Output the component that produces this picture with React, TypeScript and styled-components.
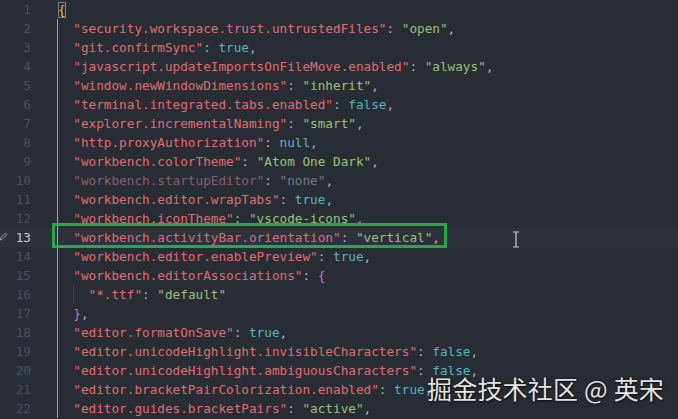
import React from "react";
import styled, { createGlobalStyle } from "styled-components";

const Global = createGlobalStyle`
  html, body { margin: 0; padding: 0; background: #282c34; }
  body { width: 678px; height: 419px; overflow: hidden; }
`;

type Kind = "key" | "str" | "const" | "p" | "b1" | "b2" | "dimKey" | "dimStr";

const colors: Record<Kind, string> = {
  key: "#e06c75",
  str: "#98c379",
  const: "#56b6c2",
  p: "#abb2bf",
  b1: "#e2c234",
  b2: "#d16fd0",
  dimKey: "#8a6068",
  dimStr: "#767c87",
};

const Editor = styled.div`
  position: relative;
  width: 678px;
  height: 419px;
  background: #282c34;
  overflow: hidden;
  font-family: "DejaVu Sans Mono", "Liberation Mono", monospace;
  font-size: 12.7px;
`;

const Row = styled.div<{ $active?: boolean }>`
  display: flex;
  height: 19px;
  line-height: 19px;
  background: ${(p) => (p.$active ? "#2c313b" : "transparent")};
  white-space: pre;
`;

const LineNo = styled.div<{ $active?: boolean }>`
  position: relative;
  width: 31px;
  flex: none;
  text-align: right;
  color: ${(p) => (p.$active ? "#c8ccd4" : "#4b5263")};
`;

const Code = styled.div<{ $guide?: boolean }>`
  position: relative;
  padding-left: 27px;
  flex: 1;
  &::before {
    content: "";
    position: absolute;
    left: 26px;
    top: 0;
    bottom: 0;
    width: 1px;
    background: ${(p) => (p.$guide ? "#c8aa34" : "transparent")};
  }
`;

const Tok = styled.span<{ $k: Kind }>`
  color: ${(p) => colors[p.$k]};
`;

const MatchBox = styled.span`
  display: inline-block;
  outline: 1px solid #7d8390;
  outline-offset: -1px;
  line-height: 16px;
  margin-top: 1px;
  color: ${colors.b1};
`;

const InnerGuide = styled.span`
  position: absolute;
  left: 42px;
  top: 0;
  bottom: 0;
  width: 1px;
  background: #3e4450;
`;

const Highlight = styled.div`
  position: absolute;
  left: 52px;
  top: 223px;
  width: 389px;
  height: 19px;
  border: 3px solid #27a846;
`;

const Pencil = styled.svg`
  position: absolute;
  left: -1px;
  top: 4px;
`;

const Cursor = styled.svg`
  position: absolute;
  left: 511px;
  top: 231px;
`;

const Watermark = styled.div`
  position: absolute;
  left: 427px;
  top: 371px;
  font-family: "Noto Sans CJK SC", "Noto Sans", sans-serif;
  font-size: 25px;
  line-height: 34px;
  color: #e4e4e4;
  letter-spacing: 0.2px;
  text-shadow: 0 0 2px rgba(0, 0, 0, 0.8), 1px 1px 2px rgba(0, 0, 0, 0.6);
  white-space: pre;
`;

type T = [Kind, string];

const kv = (key: string, val: T[], dim = false): T[] => [
  ["p", "  "],
  [dim ? "dimKey" : "key", `"${key}"`],
  ["p", ": "],
  ...val,
];

const lines: T[][] = [
  [],
  kv("security.workspace.trust.untrustedFiles", [["str", '"open"'], ["p", ","]]),
  kv("git.confirmSync", [["const", "true"], ["p", ","]]),
  kv("javascript.updateImportsOnFileMove.enabled", [["str", '"always"'], ["p", ","]]),
  kv("window.newWindowDimensions", [["str", '"inherit"'], ["p", ","]]),
  kv("terminal.integrated.tabs.enabled", [["const", "false"], ["p", ","]]),
  kv("explorer.incrementalNaming", [["str", '"smart"'], ["p", ","]]),
  kv("http.proxyAuthorization", [["const", "null"], ["p", ","]]),
  kv("workbench.colorTheme", [["str", '"Atom One Dark"'], ["p", ","]]),
  kv("workbench.startupEditor", [["dimStr", '"none"'], ["p", ","]], true),
  kv("workbench.editor.wrapTabs", [["const", "true"], ["p", ","]]),
  kv("workbench.iconTheme", [["str", '"vscode-icons"'], ["p", ","]]),
  kv("workbench.activityBar.orientation", [["str", '"vertical"'], ["p", ","]]),
  kv("workbench.editor.enablePreview", [["const", "true"], ["p", ","]]),
  kv("workbench.editorAssociations", [["b2", "{"]]),
  [["p", "    "], ["key", '"*.ttf"'], ["p", ": "], ["str", '"default"']],
  [["p", "  "], ["b2", "}"], ["p", ","]],
  kv("editor.formatOnSave", [["const", "true"], ["p", ","]]),
  kv("editor.unicodeHighlight.invisibleCharacters", [["const", "false"], ["p", ","]]),
  kv("editor.unicodeHighlight.ambiguousCharacters", [["const", "false"], ["p", ","]]),
  kv("editor.bracketPairColorization.enabled", [["const", "true"], ["p", ","]]),
  kv("editor.guides.bracketPairs", [["str", '"active"'], ["p", ","]]),
];

export default function App() {
  return (
    <>
      <Global />
      <Editor>
        {lines.map((toks, i) => {
          const n = i + 1;
          const active = n === 13;
          return (
            <Row key={n} $active={active}>
              <LineNo $active={active}>
                {active && (
                  <Pencil width="9" height="9" viewBox="0 0 9 9">
                    <path d="M1 8 L2 5.5 L6.5 1 L8 2.5 L3.5 7 Z" fill="none" stroke="#9aa0aa" strokeWidth="1" />
                  </Pencil>
                )}
                {n}
              </LineNo>
              <Code $guide={n > 1}>
                {n === 1 ? <MatchBox>{"{"}</MatchBox> : null}
                {n === 16 && <InnerGuide />}
                {toks.map(([k, s], j) => (
                  <Tok key={j} $k={k}>
                    {s}
                  </Tok>
                ))}
              </Code>
            </Row>
          );
        })}
        <Highlight />
        <Cursor width="10" height="17" viewBox="0 0 10 17">
          <path d="M2 1 H8 M5 1 V16 M2 16 H8" stroke="#c8ccd4" strokeWidth="1.2" fill="none" />
        </Cursor>
        <Watermark>掘金技术社区 @ 英宋</Watermark>
      </Editor>
    </>
  );
}
